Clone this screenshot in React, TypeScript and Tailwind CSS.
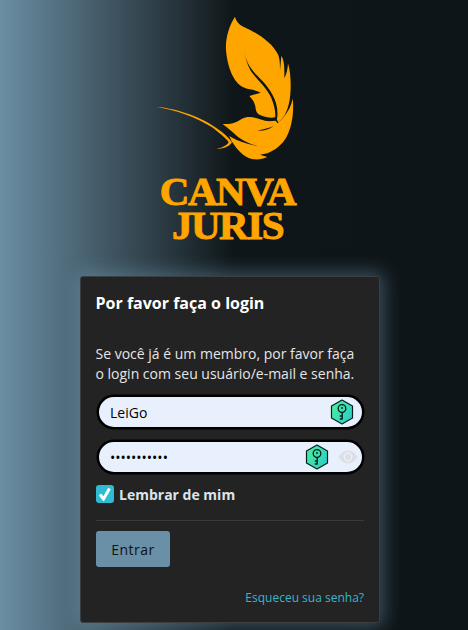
const KeyBadge = () => (
  <svg width="24" height="26" viewBox="0 0 24 26" className="shrink-0">
    <defs>
      <linearGradient id="kg" x1="0" y1="0" x2="1" y2="0.6">
        <stop offset="0" stopColor="#4cf09a" />
        <stop offset="1" stopColor="#30cfc4" />
      </linearGradient>
    </defs>
    <path d="M12 1 L22.5 7 V19 L12 25 L1.5 19 V7 Z" fill="url(#kg)" stroke="#04201c" strokeWidth="1.2" strokeLinejoin="round" />
    <circle cx="12" cy="9.5" r="3.8" fill="none" stroke="#04201c" strokeWidth="1.3" />
    <circle cx="12" cy="9" r="0.9" fill="#04201c" />
    <path d="M12.2 13.3 V20.5 M12.2 17 H9.8 M12.2 20 H9.8" fill="none" stroke="#04201c" strokeWidth="1.4" />
  </svg>
);

const Eye = () => (
  <svg width="20" height="14" viewBox="0 0 20 14" className="shrink-0">
    <path d="M0.5 7 C4 1.5 7 0.5 10 0.5 C13 0.5 16 1.5 19.5 7 C16 12.5 13 13.5 10 13.5 C7 13.5 4 12.5 0.5 7 Z" fill="#dcdfe4" />
    <circle cx="10" cy="7" r="4.4" fill="#e8f0fe" />
    <circle cx="10" cy="7" r="3" fill="#dcdfe4" />
  </svg>
);

const Feather = () => (
  <svg width="150" height="160" viewBox="0 0 450 480" className="block">
    <path
      fill="#ffa500"
      d="M255 20 C258 32 265 42 280 50 C320 68 365 95 385 135 C390 150 390 165 390 182 L394 138 C402 150 404 168 403 205 C410 190 413 178 414 160 C424 195 424 240 418 275 C412 305 400 325 385 338 C382 330 378 325 375 322 C365 325 345 322 332 316 C322 312 318 305 317 296 C316 280 308 268 298 258 L332 248 C316 238 296 240 280 232 C250 218 232 170 228 120 C226 85 236 50 255 20 Z"
    />
    <path
      fill="#0f1619"
      d="M282 118 C285 150 300 175 320 195 C345 220 368 245 378 280 C384 300 384 320 378 338 L374 332 C379 312 374 288 364 264 C350 232 320 208 303 184 C292 165 285 142 282 118 Z"
    />
    <path
      fill="#ffa500"
      d="M218 342 C245 344 262 336 276 326 C292 318 310 320 330 328 C348 335 362 334 376 332 C384 338 384 342 378 346 C364 352 342 358 322 362 C350 366 382 346 400 322 C416 304 424 285 428 266 C432 300 428 345 410 380 C396 405 375 420 352 430 L330 434 L352 441 C338 448 320 450 305 447 C280 440 262 420 244 392 L238 378 C255 390 295 405 338 411 C300 405 270 388 250 368 C238 358 228 350 218 342 Z"
    />
    <path
      fill="#ffa500"
      d="M20 291 C70 293 150 320 190 348 C215 364 232 378 246 397 C240 408 224 416 200 417 C218 412 232 406 236 396 C226 384 205 366 186 352 C140 322 70 298 20 291 Z"
    />
  </svg>
);

export default function App() {
  return (
    <div
      className="w-[468px] h-[630px] overflow-hidden bg-[linear-gradient(90deg,#6a8ea3_0%,#0f1619_50%,#0e1518_100%)]"
      style={{ fontFamily: '"Open Sans", sans-serif' }}
    >
      <div className="w-[460px] flex flex-col items-center">
        <div className="w-full flex flex-col items-center pt-[10px] h-[276px] shrink-0">
          <div className="ml-[-10px]"><Feather /></div>
          <div
            className="flex flex-col items-center text-[#ffa500] font-bold mr-[5px] mt-[4px] text-[41px] leading-[34px] tracking-[-1.5px] [-webkit-text-stroke:1px_#ffa500]"
            style={{ fontFamily: '"Liberation Serif", serif' }}
          >
            <span>CANVA</span>
            <span>JURIS</span>
          </div>
        </div>

        <div className="w-[300px] h-[347px] shrink-0 bg-[#232323] rounded-[3px] border border-[#3a3f44] shadow-[0_0_18px_4px_rgba(110,150,175,0.45)] px-[15px] pt-[14px] flex flex-col">
          <h1 className="text-white font-bold text-[16px] leading-[24px] ml-[-0.5px]">Por favor faça o login</h1>
          <p className="mt-[29px] ml-[-0.5px] text-[#e6e6e6] text-[14px] leading-[20px] whitespace-nowrap">
            Se você já é um membro, por favor faça
            <br />o login com seu usuário/e-mail e senha.
          </p>

          <div className="mt-[11px] ml-px w-[267px] h-[34px] rounded-full border-2 border-black shadow-[0_0_0_0.5px_#000] bg-[#e8f0fe] flex items-center pl-[11px] pr-[8px]">
            <span className="flex-1 text-[14px] text-black">LeiGo</span>
            <KeyBadge />
          </div>
          <div className="mt-[11px] ml-px w-[267px] h-[34px] rounded-full border-2 border-black shadow-[0_0_0_0.5px_#000] bg-[#e8f0fe] flex items-center pl-[11px] pr-[4px]">
            <span className="flex-1 text-[14px] text-black">•••••••••••</span>
            <KeyBadge />
            <span className="ml-[9px]"><Eye /></span>
          </div>

          <div className="mt-[10px] flex items-center h-[20px]">
            <span className="w-[18px] h-[18px] rounded-[3px] bg-[#2fbcd3] flex items-center justify-center">
              <svg width="14" height="14" viewBox="0 0 14 14">
                <path d="M2 7.5 L5.5 12 L11.5 1.5" fill="none" stroke="#fff" strokeWidth="3" />
              </svg>
            </span>
            <span className="ml-[5px] text-[14px] font-bold text-[#dde3ea]">Lembrar de mim</span>
          </div>

          <div className="mt-[16px] h-px bg-[#3a3a3a]" />

          <button className="mt-[10px] w-[74px] h-[36px] rounded-[3px] bg-[#6a90a8] text-[#0d1114] text-[14px] tracking-[0.5px]">
            Entrar
          </button>

          <div className="mt-[22px] text-right text-[12px] leading-[18px] text-[#39b5cf]">Esqueceu sua senha?</div>
        </div>
      </div>
    </div>
  );
}
